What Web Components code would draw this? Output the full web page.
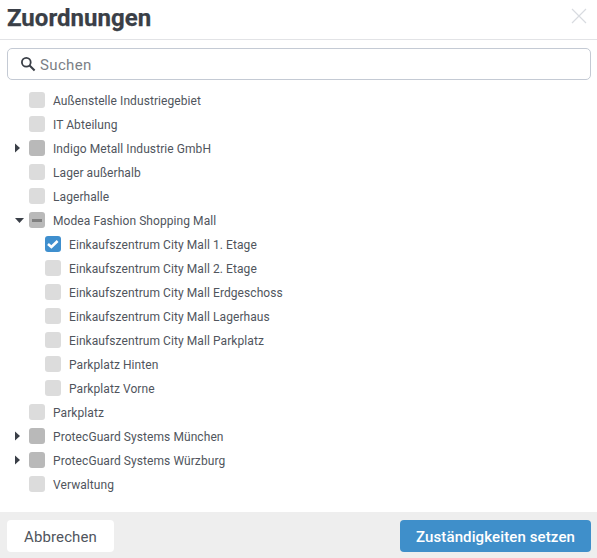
<!DOCTYPE html>
<html><head><meta charset="utf-8"><style>
html,body{margin:0;padding:0;background:#fff}
body{font-family:Roboto,"Liberation Sans",sans-serif;width:597px;height:558px;overflow:hidden}
</style></head><body>
<assign-dialog></assign-dialog>
<script>
class TreeRow extends HTMLElement{
  connectedCallback(){
    const level=+(this.getAttribute('level')||0), state=this.getAttribute('state')||'off', tw=this.getAttribute('twisty')||'';
    const s=this.attachShadow({mode:'open'});
    const tg=tw==='right'?'<svg width="12" height="16" viewBox="0 0 12 16"><path d="M4 3.5 9 8 4 12.5Z" fill="#3a3f47"/></svg>':
      tw==='down'?'<svg width="12" height="16" viewBox="0 0 12 16"><path d="M4 6H13L8.5 11Z" fill="#3a3f47" style="overflow:visible"/></svg>':'';
    const mark=state==='on'?'<svg width="16" height="16" viewBox="0 0 16 16"><path d="M3 8 6.4 11 12.6 5" fill="none" stroke="#fff" stroke-width="2.6"/></svg>':
      state==='mixed'?'<i></i>':'';
    s.innerHTML=`<style>
    :host{display:flex;align-items:center;height:24px;padding-left:${level*16+11}px;font-size:12px;color:#50555d;letter-spacing:.075px}
    .t{width:12px;height:16px;display:flex;flex:none;margin:0 6px 2px 0}
    .t svg{overflow:visible}
    .c{width:16px;height:16px;border-radius:3px;background:#dcdcdc;flex:none;margin:0 8px 2px 0;display:flex;align-items:center;justify-content:center}
    .c.mixed,.c.some{background:#b9b9b9}.c.on{background:#3f8fce}
    i{display:block;width:10px;height:3px;background:#808080}
    </style><span class="t">${tg}</span><span class="c ${state}">${mark}</span><slot></slot>`;
  }
}
customElements.define('tree-row',TreeRow);
class SearchBox extends HTMLElement{
  connectedCallback(){
    this.attachShadow({mode:'open'}).innerHTML=`<style>
    :host{display:flex;align-items:center;gap:4px;height:32px;box-sizing:border-box;margin:8px 6px 0 7px;padding-left:12px;border:1px solid #c4cad4;border-radius:5px;font-size:15px;color:#7b7f86;letter-spacing:.35px}
    svg{flex:none;margin-top:-1px}
    .l{padding-top:2px}
    </style><svg width="16" height="16" viewBox="0 0 16 16"><circle cx="6.3" cy="6.3" r="4.4" fill="none" stroke="#3a3f47" stroke-width="1.8"/><path d="M9.6 9.6 14.6 14.6" stroke="#3a3f47" stroke-width="2.1"/></svg><span class="l"><slot></slot></span>`;
  }
}
customElements.define('search-box',SearchBox);
class ActionButton extends HTMLElement{
  connectedCallback(){
    this.attachShadow({mode:'open'}).innerHTML=`<style>
    :host{display:flex;align-items:center;justify-content:center;height:32px;border-radius:4px;font-size:15px;letter-spacing:.12px;background:#fff;color:#50555d;box-sizing:border-box;padding-top:2px}
    :host([primary]){background:#3f8fca;color:#fff;font-weight:500}
    </style><slot></slot>`;
  }
}
customElements.define('action-button',ActionButton);
class AssignDialog extends HTMLElement{
  connectedCallback(){
    const rows=[
      [0,'off','','Außenstelle Industriegebiet'],[0,'off','','IT Abteilung'],[0,'some','right','Indigo Metall Industrie GmbH'],
      [0,'off','','Lager außerhalb'],[0,'off','','Lagerhalle'],[0,'mixed','down','Modea Fashion Shopping Mall'],
      [1,'on','','Einkaufszentrum City Mall 1. Etage'],[1,'off','','Einkaufszentrum City Mall 2. Etage'],[1,'off','','Einkaufszentrum City Mall Erdgeschoss'],
      [1,'off','','Einkaufszentrum City Mall Lagerhaus'],[1,'off','','Einkaufszentrum City Mall Parkplatz'],[1,'off','','Parkplatz Hinten'],[1,'off','','Parkplatz Vorne'],
      [0,'off','','Parkplatz'],[0,'some','right','ProtecGuard Systems München'],[0,'some','right','ProtecGuard Systems Würzburg'],[0,'off','','Verwaltung']];
    this.attachShadow({mode:'open'}).innerHTML=`<style>
    :host{display:flex;flex-direction:column;width:597px;height:558px}
    header{display:flex;align-items:center;justify-content:space-between;height:39px;border-bottom:1px solid #e2e3e6;padding:0 10px 0 7px}
    h1{margin:0 0 4px;font-size:24px;font-weight:700;color:#3a3f47;line-height:34px;letter-spacing:.02px;-webkit-text-stroke:.25px #3a3f47}
    header svg{margin-bottom:7px}
    .tree{flex:1;padding-top:9px}
    footer{height:46px;box-sizing:border-box;padding:8px 6px 0 7px;background:#eeeeee;display:flex;justify-content:space-between;align-items:flex-start}
    action-button:first-child{width:107px}action-button:last-child{width:191px}
    </style><header><h1>Zuordnungen</h1><svg width="16" height="16" viewBox="0 0 16 16"><path d="M1 1 15 15M15 1 1 15" stroke="#d8dbe0" stroke-width="1.2" fill="none"/></svg></header>
    <search-box>Suchen</search-box>
    <div class="tree">${rows.map(r=>`<tree-row level="${r[0]}" state="${r[1]}" twisty="${r[2]}">${r[3]}</tree-row>`).join('')}</div>
    <footer><action-button>Abbrechen</action-button><action-button primary>Zuständigkeiten setzen</action-button></footer>`;
  }
}
customElements.define('assign-dialog',AssignDialog);
</script>
</body></html>
